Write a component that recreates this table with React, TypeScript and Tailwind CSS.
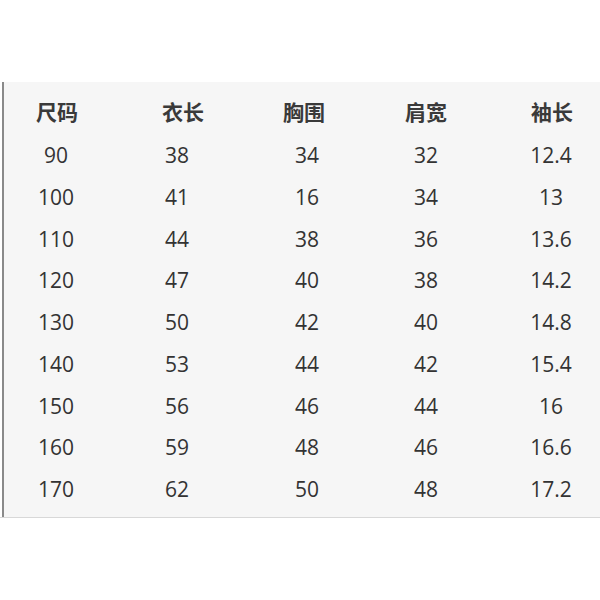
const headers = ['尺码', '衣长', '胸围', '肩宽', '袖长'];

const rows: string[][] = [
    ['90', '38', '34', '32', '12.4'],
    ['100', '41', '16', '34', '13'],
    ['110', '44', '38', '36', '13.6'],
    ['120', '47', '40', '38', '14.2'],
    ['130', '50', '42', '40', '14.8'],
    ['140', '53', '44', '42', '15.4'],
    ['150', '56', '46', '44', '16'],
    ['160', '59', '48', '46', '16.6'],
    ['170', '62', '50', '48', '17.2'],
];

// values sit a little off the header centres in the picture
const valueShift = ['pr-[2px]', 'pr-[12px]', 'pl-[6px]', '', 'pr-[2px]'];

const App = () => {
    return (
        <div className="w-[600px] h-[600px] bg-white pt-[82px]" style={{ fontFamily: '"Open Sans", "Noto Sans CJK SC", sans-serif' }}>
            <div className="ml-[2px] border-l-2 border-[#8a8a8a] bg-[#f6f6f6] pt-[9px] pb-[6px]">
                <div className="grid grid-cols-[106px_146px_96px_148px_104px] text-[#333]">
                    {headers.map(h => (
                        <div key={h} className="h-[44px] flex items-center justify-center text-[21px] font-bold text-[#3a3a3a]">
                            {h}
                        </div>
                    ))}
                    {rows.map((r, i) =>
                        r.map((v, j) => (
                            <div key={i + '-' + j} className={'h-[41.75px] flex items-center justify-center text-[21px] ' + valueShift[j]}>
                                {v}
                            </div>
                        ))
                    )}
                </div>
            </div>
            <div className="h-[1px] bg-[#d8d8d8]"></div>
        </div>
    );
};

export default App;
